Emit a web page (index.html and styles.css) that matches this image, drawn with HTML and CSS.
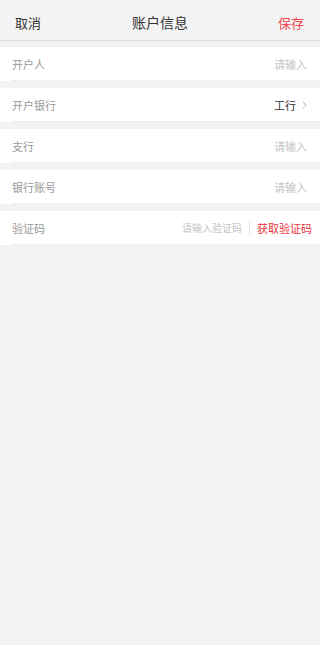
FILE: index.html
```html
<!DOCTYPE html>
<html lang="zh-CN">
<head>
<meta charset="utf-8">
<meta name="viewport" content="width=device-width, initial-scale=1">
<title>账户信息</title>
<link rel="stylesheet" href="styles.css">
</head>
<body>
<header class="nav">
  <span class="nav-btn">取消</span>
  <span class="nav-title">账户信息</span>
  <span class="nav-btn save">保存</span>
</header>
<main class="list">
  <div class="row"><div class="row-inner"><span class="label">开户人</span><span class="placeholder">请输入</span></div></div>
  <div class="row"><div class="row-inner"><span class="label">开户银行</span><span class="value">工行<svg class="chev" width="5" height="8" viewBox="0 0 5 8"><path d="M0.8 0.8 L4 4 L0.8 7.2" fill="none" stroke="#b5b5b5" stroke-width="1"/></svg></span></div></div>
  <div class="row"><div class="row-inner"><span class="label">支行</span><span class="placeholder">请输入</span></div></div>
  <div class="row"><div class="row-inner"><span class="label">银行账号</span><span class="placeholder">请输入</span></div></div>
  <div class="row"><div class="row-inner code-row"><span class="label">验证码</span><span class="code-right"><span class="placeholder small">请输入验证码</span><span class="sep"></span><span class="get-code">获取验证码</span></span></div></div>
</main>
</body>
</html>
```
FILE: styles.css
```css
* { box-sizing: border-box; }
html, body { margin: 0; padding: 0; }
body {
  width: 320px;
  min-height: 645px;
  background: #f3f3f3;
  font-family: "Noto Sans CJK SC", "Noto Sans", sans-serif;
}
.nav {
  height: 41px;
  background: #f3f3f3;
  border-bottom: 1px solid #dcdcdc;
  display: flex;
  align-items: center;
  justify-content: space-between;
  padding: 0 16px 0 15px;
  position: relative;
}
.nav-btn {
  font-size: 13px;
  color: #333;
  line-height: 18px;
  padding-top: 5px;
}
.nav-btn.save { color: #ef4750; }
.nav-title {
  position: absolute;
  left: 0;
  right: 0;
  top: 0;
  bottom: 0;
  display: flex;
  align-items: center;
  justify-content: center;
  font-size: 14px;
  color: #333;
  padding-top: 4px;
  pointer-events: none;
}
.list {
  padding-top: 6px;
  display: flex;
  flex-direction: column;
  gap: 7px;
}
.row {
  background: #fff;
  height: 34px;
  padding-left: 12px;
}
.row-inner {
  height: 34px;
  border-bottom: 1px solid #efefef;
  display: flex;
  align-items: center;
  justify-content: space-between;
  padding-right: 13px;
}
.label {
  font-size: 11px;
  color: #999;
  line-height: 16px;
}
.placeholder {
  font-size: 11px;
  color: #c4c4c4;
  line-height: 16px;
}
.placeholder.small { font-size: 10px; }
.value {
  font-size: 11px;
  color: #333;
  line-height: 16px;
  display: flex;
  align-items: center;
  gap: 6px;
}
.chev { display: block; }
.code-row { padding-right: 8px; }
.code-right {
  display: flex;
  align-items: center;
}
.sep {
  width: 1px;
  height: 14px;
  background: #e6e6e6;
  margin: 0 7px;
}
.get-code {
  font-size: 11px;
  color: #e8343c;
  line-height: 16px;
}
```
